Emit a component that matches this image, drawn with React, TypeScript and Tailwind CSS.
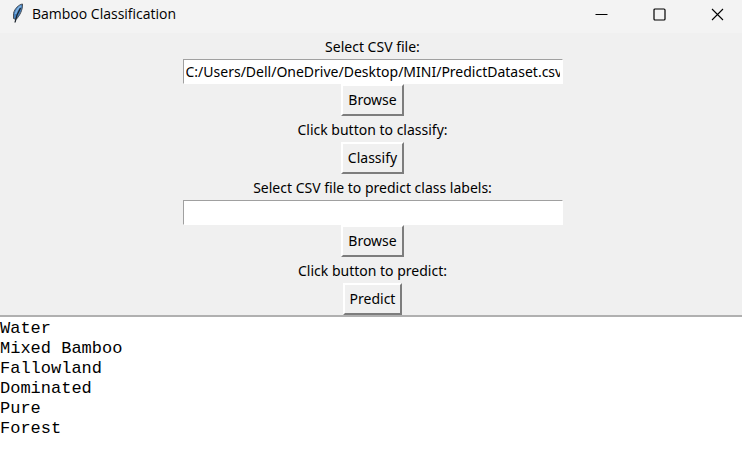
import { useState } from "react";
import type { ReactNode } from "react";

const RESULTS = ["Water", "Mixed Bamboo", "Fallowland", "Dominated", "Pure", "Forest"];

function FeatherIcon() {
  return (
    <svg width="13" height="20" viewBox="0 0 13 20" aria-hidden="true">
      <path d="M11.5 1C8 1.5 3.5 5.5 2.5 10.5L2.5 15.5L5 16.5C9 12.5 11.8 6.5 11.5 1Z" fill="#4580bd" stroke="#4a4f57" strokeWidth="1" />
      <path d="M10 3C7.5 4.5 5.5 7.5 4.5 11" fill="none" stroke="#7fb2e2" strokeWidth="1.5" />
      <path d="M9.5 5C7 9 5 12.5 4 19.5" fill="none" stroke="#1c242d" strokeWidth="1.3" />
    </svg>
  );
}

function CaptionButton({ label, children }: { label: string; children: ReactNode }) {
  return (
    <button type="button" aria-label={label} className="flex h-full w-[58px] items-center justify-center">
      <svg width="13" height="13" viewBox="0 0 13 13" fill="none" stroke="#000000" aria-hidden="true">
        {children}
      </svg>
    </button>
  );
}

function TkButton({ children }: { children: ReactNode }) {
  return (
    <button
      type="button"
      className="flex h-8 items-center border-2 border-t-white border-r-[#7d7d7d] border-b-[#7d7d7d] border-l-white bg-[#f0f0f0] px-[5px] text-sm"
    >
      {children}
    </button>
  );
}

function TkEntry({ id, initial }: { id: string; initial: string }) {
  const [value, setValue] = useState(initial);
  return (
    <input
      id={id}
      type="text"
      value={value}
      onChange={(event) => setValue(event.target.value)}
      className="h-[25px] w-[380px] border border-t-[#a0a0a0] border-r-white border-b-white border-l-[#a0a0a0] bg-white px-0.5 text-sm outline-none"
    />
  );
}

const LABEL = "flex h-[26px] items-center pt-0.5 text-sm";

export default function App() {
  return (
    <div className="flex min-h-screen flex-col bg-[#f0f0f0] font-['Noto_Sans',sans-serif] text-black">
      <header className="flex h-[33px] items-center bg-[#f3f3f3] pl-[11px]">
        <div className="pb-2">
          <FeatherIcon />
        </div>
        <h1 className="flex-1 pb-1.5 pl-2 font-['Open_Sans',sans-serif] text-sm">Bamboo Classification</h1>
        <div className="-mr-1 flex h-full pb-[5px]">
          <CaptionButton label="Minimize">
            <path d="M0.5 6.5H12.5" />
          </CaptionButton>
          <CaptionButton label="Maximize">
            <rect x="1" y="1" width="11" height="11" rx="1" strokeWidth="1.2" />
          </CaptionButton>
          <CaptionButton label="Close">
            <path d="M1 1L12 12M12 1L1 12" strokeWidth="1.1" />
          </CaptionButton>
        </div>
      </header>
      <main className="flex flex-1 flex-col">
        <form className="flex flex-col items-center pl-[3px]">
          <label htmlFor="train-file" className={LABEL}>Select CSV file:</label>
          <TkEntry id="train-file" initial="C:/Users/Dell/OneDrive/Desktop/MINI/PredictDataset.csv" />
          <TkButton>Browse</TkButton>
          <p className={LABEL}>Click button to classify:</p>
          <TkButton>Classify</TkButton>
          <label htmlFor="predict-file" className={LABEL}>Select CSV file to predict class labels:</label>
          <TkEntry id="predict-file" initial="" />
          <TkButton>Browse</TkButton>
          <p className={LABEL}>Click button to predict:</p>
          <TkButton>Predict</TkButton>
        </form>
        <section aria-label="Results" className="flex-1 border-t-2 border-[#b0b0b0] bg-white pt-0.5 font-['Liberation_Mono',monospace] text-[17px] leading-5">
          {RESULTS.map((name) => (
            <p key={name}>{name}</p>
          ))}
        </section>
      </main>
    </div>
  );
}
